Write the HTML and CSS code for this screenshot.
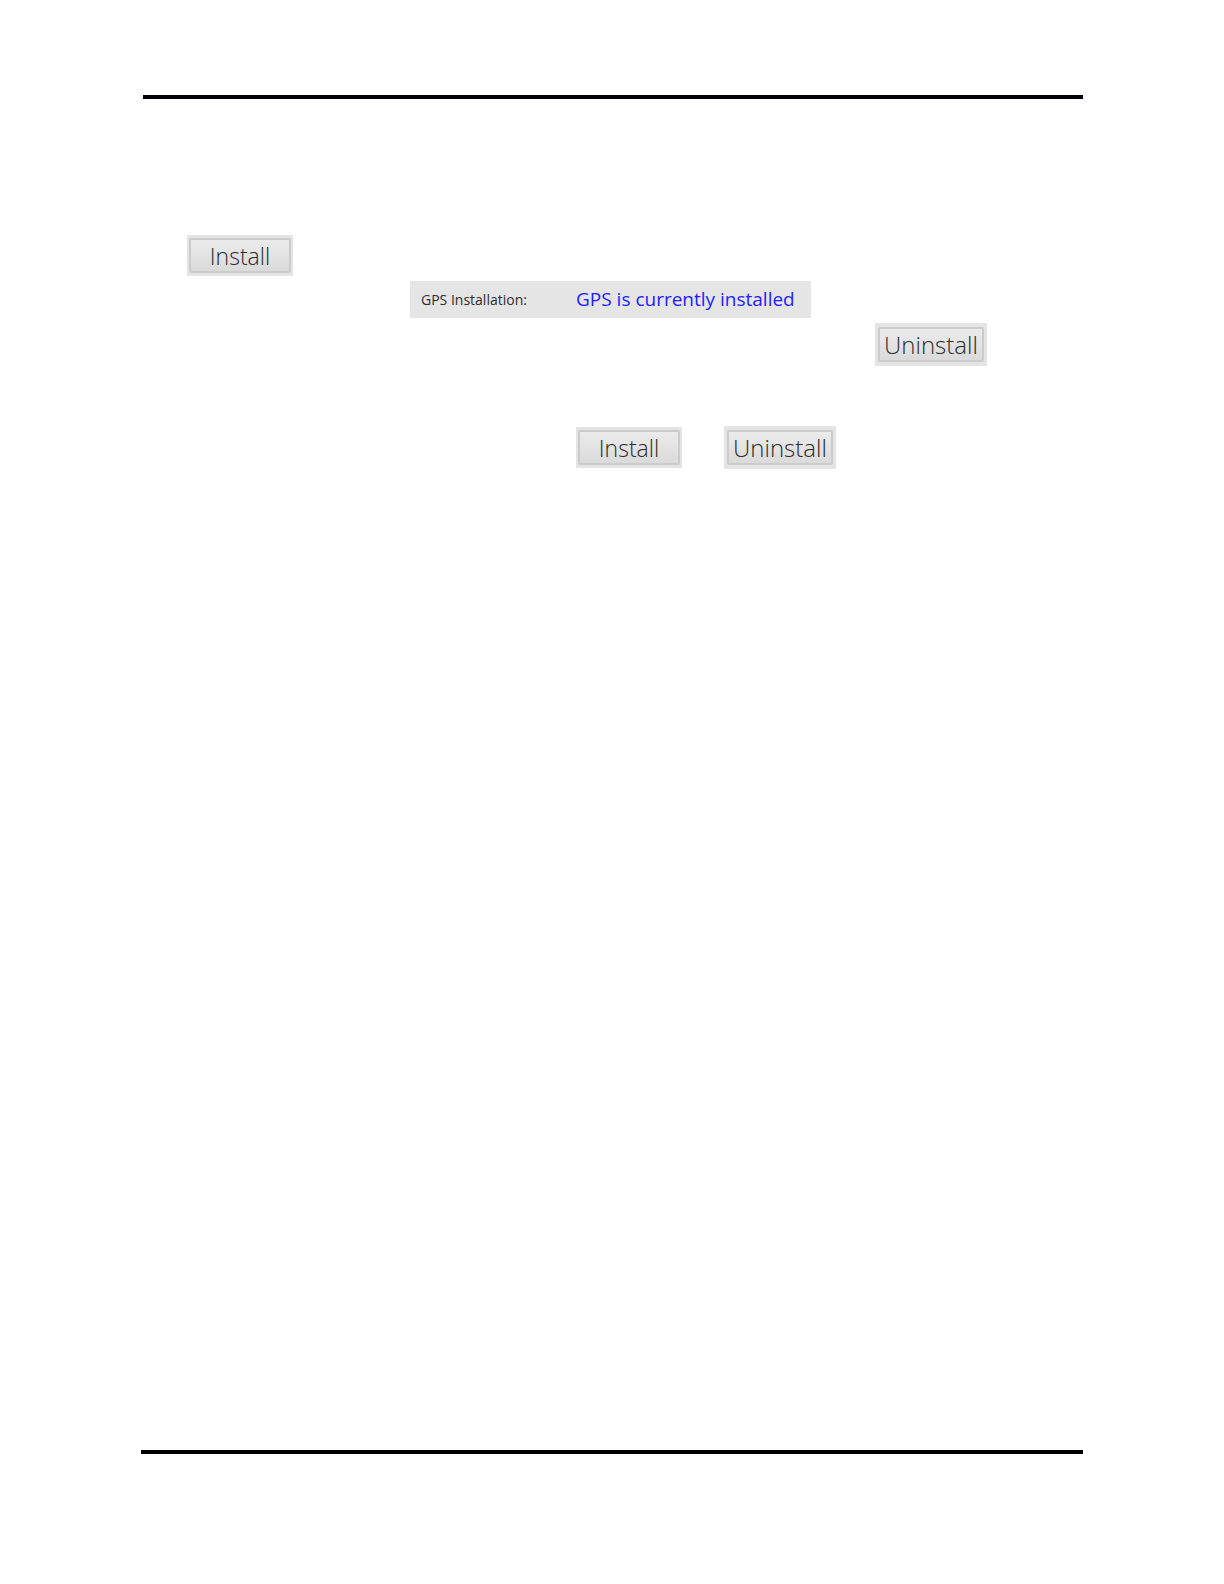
FILE: index.html
```html
<!DOCTYPE html>
<html lang="en">
<head>
  <meta charset="utf-8" />
  <meta name="viewport" content="width=device-width, initial-scale=1.0">
  <title>GPS Installation</title>
  <link rel="stylesheet" href="styles.css">
</head>
<body>
  <div class="page">
    <hr class="rule rule--top">

    <main class="content">
      <div class="row row--install">
        <span class="frame"><button type="button" class="btn">Install</button></span>
      </div>

      <div class="row row--status">
        <div class="status">
          <span class="status__label">GPS Installation:</span>
          <span class="status__value">GPS is currently installed</span>
        </div>
      </div>

      <div class="row row--uninstall">
        <span class="frame frame--wide"><button type="button" class="btn">Uninstall</button></span>
      </div>

      <div class="row row--both">
        <span class="frame"><button type="button" class="btn">Install</button></span>
        <span class="frame frame--wide"><button type="button" class="btn">Uninstall</button></span>
      </div>
    </main>

    <hr class="rule">
  </div>
</body>
</html>
```

FILE: styles.css
```css
* {
  margin: 0;
  padding: 0;
  box-sizing: border-box;
}

body {
  background: #fff;
  font-family: "Open Sans", "Noto Sans", sans-serif;
}

/* ===== PAGE ===== */
.page {
  display: flex;
  flex-direction: column;
  min-height: 100vh;
  padding: 95px 141px 130px;
}

.rule {
  border: 0;
  border-top: 4px solid #000;
}
.rule--top {
  margin-left: 2px;
  border-color: #00000c;
}

.content {
  flex: 1;
  display: flex;
  flex-direction: column;
  gap: 5px;
  padding-top: 136px;
}

/* ===== ROWS ===== */
.row {
  display: flex;
  align-items: center;
}
.row--install {
  padding-left: 46px;
}
.row--status {
  padding-left: 269px;
}
.row--uninstall {
  justify-content: flex-end;
  padding-right: 96px;
}
.row--both {
  gap: 42px;
  margin-top: 55px;
  padding-left: 435px;
}

/* ===== BUTTONS ===== */
.frame {
  display: flex;
  width: 106px;
  height: 41px;
  padding: 3px 2px;
  background: #e4e4e4;
}
.frame--wide {
  width: 112px;
  height: 43px;
  padding: 4px 3px;
}

.btn {
  flex: 1;
  border: 2px solid #cbcbcb;
  border-radius: 2px;
  background: linear-gradient(#ebebeb, #dadada);
  color: #2c2c2c;
  font-family: inherit;
  font-size: 23px;
  font-weight: 300;
  line-height: 32px;
}
.frame--wide .btn {
  font-size: 24px;
}

/* ===== STATUS ===== */
.status {
  display: grid;
  grid-template-columns: 155px auto;
  align-items: center;
  height: 37px;
  padding: 0 16px 0 11px;
  background: #e5e5e5;
}
.status__label {
  color: #2e2e2e;
  font-size: 14px;
}
.status__value {
  color: #231eff;
  font-size: 19px;
  line-height: 24px;
  padding-bottom: 2px;
}
```
